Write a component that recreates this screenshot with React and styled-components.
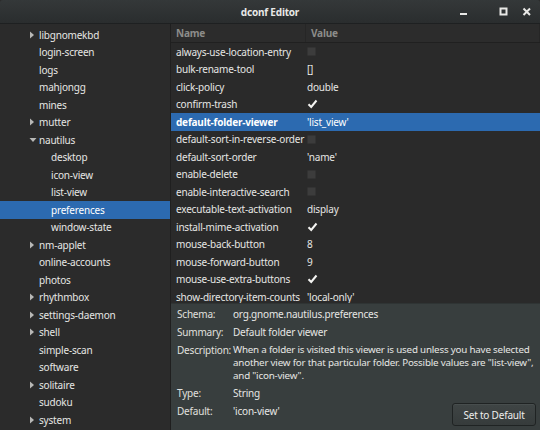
import React from 'react';
import styled, { createGlobalStyle } from 'styled-components';

const tree = [
  { name: 'libgnomekbd', level: 1, arrow: 'right' },
  { name: 'login-screen', level: 1 },
  { name: 'logs', level: 1 },
  { name: 'mahjongg', level: 1 },
  { name: 'mines', level: 1 },
  { name: 'mutter', level: 1, arrow: 'right' },
  { name: 'nautilus', level: 1, arrow: 'down' },
  { name: 'desktop', level: 2 },
  { name: 'icon-view', level: 2 },
  { name: 'list-view', level: 2 },
  { name: 'preferences', level: 2, selected: true },
  { name: 'window-state', level: 2 },
  { name: 'nm-applet', level: 1, arrow: 'right' },
  { name: 'online-accounts', level: 1 },
  { name: 'photos', level: 1 },
  { name: 'rhythmbox', level: 1, arrow: 'right' },
  { name: 'settings-daemon', level: 1, arrow: 'right' },
  { name: 'shell', level: 1, arrow: 'right' },
  { name: 'simple-scan', level: 1 },
  { name: 'software', level: 1 },
  { name: 'solitaire', level: 1, arrow: 'right' },
  { name: 'sudoku', level: 1 },
  { name: 'system', level: 1, arrow: 'right' },
];

const keys = [
  { name: 'always-use-location-entry', type: 'bool', value: false },
  { name: 'bulk-rename-tool', value: '[]' },
  { name: 'click-policy', value: 'double' },
  { name: 'confirm-trash', type: 'bool', value: true },
  { name: 'default-folder-viewer', value: "'list_view'", selected: true },
  { name: 'default-sort-in-reverse-order', type: 'bool', value: false },
  { name: 'default-sort-order', value: "'name'" },
  { name: 'enable-delete', type: 'bool', value: false },
  { name: 'enable-interactive-search', type: 'bool', value: false },
  { name: 'executable-text-activation', value: 'display' },
  { name: 'install-mime-activation', type: 'bool', value: true },
  { name: 'mouse-back-button', value: '8' },
  { name: 'mouse-forward-button', value: '9' },
  { name: 'mouse-use-extra-buttons', type: 'bool', value: true },
  { name: 'show-directory-item-counts', value: "'local-only'" },
];

const Check = () => (
  <svg width="11" height="10" viewBox="0 0 11 10">
    <path d="M1.5 5.2 L4.2 8 L9.5 1.5" fill="none" stroke="#f4f4f2" strokeWidth="2" />
  </svg>
);

const App = () => {
  return (
    <Window>
      <GlobalStyle />
      <TitleBar>
        <Title>dconf Editor</Title>
        <WinButtons>
          <WinButton $gap={30}>
            <svg width="10" height="10" viewBox="0 0 10 10">
              <rect x="1" y="6" width="7" height="2" fill="#e8e8e6" />
            </svg>
          </WinButton>
          <WinButton $gap={13}>
            <svg width="10" height="10" viewBox="0 0 10 10">
              <rect x="1.5" y="1.5" width="6" height="6" fill="none" stroke="#e8e8e6" strokeWidth="2" />
            </svg>
          </WinButton>
          <WinButton>
            <svg width="10" height="10" viewBox="0 0 10 10">
              <path d="M1.5 1.5 L8 8 M8 1.5 L1.5 8" stroke="#e8e8e6" strokeWidth="2" />
            </svg>
          </WinButton>
        </WinButtons>
      </TitleBar>
      <Body>
        <Tree>
          {tree.map((item, i) => (
            <TreeRow key={i} $selected={item.selected} $level={item.level}>
              <Arrow>
                {item.arrow === 'right' && (
                  <svg width="6" height="8" viewBox="0 0 6 8"><path d="M1 0.5 L5 4 L1 7.5Z" fill="#b8b8b6" /></svg>
                )}
                {item.arrow === 'down' && (
                  <svg width="8" height="6" viewBox="0 0 8 6"><path d="M0.5 1 L7.5 1 L4 5Z" fill="#b8b8b6" /></svg>
                )}
              </Arrow>
              <span>{item.name}</span>
            </TreeRow>
          ))}
        </Tree>
        <Right>
          <List>
            <Header>
              <HeadCell $w={135}>Name</HeadCell>
              <HeadCell>Value</HeadCell>
            </Header>
            {keys.map((k, i) => (
              <KeyRow key={i} $selected={k.selected}>
                <NameCell $selected={k.selected}>{k.name}</NameCell>
                <ValueCell>
                  {k.type === 'bool' ? (k.value ? <Check /> : <Box />) : k.value}
                </ValueCell>
              </KeyRow>
            ))}
          </List>
          <Details>
            <Info>
              <Label>Schema:</Label>
              <Text>org.gnome.nautilus.preferences</Text>
              <Label>Summary:</Label>
              <Text>Default folder viewer</Text>
              <Label>Description:</Label>
              <Text $multi>
                When a folder is visited this viewer is used unless you have selected<br />
                another view for that particular folder. Possible values are "list-view",<br />
                and "icon-view".
              </Text>
              <Label>Type:</Label>
              <Text>String</Text>
              <Label>Default:</Label>
              <Text>'icon-view'</Text>
            </Info>
            <DefaultButton>Set to Default</DefaultButton>
          </Details>
        </Right>
      </Body>
    </Window>
  );
};

export default App;

const GlobalStyle = createGlobalStyle`
  html, body {
    margin: 0;
    padding: 0;
    background: #2b2b2b;
  }
  body {
    font-family: 'Noto Sans', 'Open Sans', sans-serif;
    font-size: 10px;
    letter-spacing: -0.2px;
    color: #e6e6e4;
  }
`;

const Window = styled.div`
  width: 540px;
  height: 430px;
  display: flex;
  flex-direction: column;
  overflow: hidden;
  background: #2b2b2b;
`;

const TitleBar = styled.div`
  height: 24px;
  flex: none;
  position: relative;
  display: flex;
  align-items: center;
  justify-content: center;
  background: linear-gradient(#343839, #2a2d2e);
  border-bottom: 1px solid #1e2021;
  box-sizing: border-box;
  border-radius: 3px 3px 0 0;
`;

const Title = styled.div`
  font-weight: bold;
  font-size: 10px;
  color: #e8e8e6;
`;

const WinButtons = styled.div`
  position: absolute;
  right: 8px;
  top: 7px;
  display: flex;
`;

const WinButton = styled.span`
  display: flex;
  margin-right: ${p => p.$gap || 0}px;
`;

const Body = styled.div`
  flex: 1;
  display: flex;
  min-height: 0;
`;

const Tree = styled.div`
  width: 170px;
  flex: none;
  padding-top: 2px;
  background: #2b2b2b;
  border-right: 1px solid #1f1f1f;
  overflow: hidden;
`;

const TreeRow = styled.div`
  height: 17.5px;
  display: flex;
  align-items: center;
  padding-left: ${p => (p.$level === 2 ? 39 : 27)}px;
  background: ${p => (p.$selected ? '#2c6ab0' : 'transparent')};
  color: ${p => (p.$selected ? '#ffffff' : '#e6e6e4')};
  white-space: nowrap;
`;

const Arrow = styled.span`
  width: 12px;
  display: flex;
  align-items: center;
  padding-left: 2px;
  box-sizing: border-box;
`;

const Right = styled.div`
  flex: 1;
  display: flex;
  flex-direction: column;
  min-width: 0;
`;

const List = styled.div`
  height: 279px;
  flex: none;
  overflow: hidden;
  background: #2a2a2a;
`;

const Header = styled.div`
  height: 19px;
  display: flex;
  border-bottom: 1px solid #202020;
  box-sizing: border-box;
`;

const HeadCell = styled.div`
  width: ${p => (p.$w ? `${p.$w}px` : 'auto')};
  flex: ${p => (p.$w ? 'none' : '1')};
  padding-left: 5px;
  box-sizing: border-box;
  display: flex;
  align-items: center;
  color: #8c8c8a;
  font-weight: bold;
  background: #2c2c2c;
  border-right: 1px solid #262626;
`;

const KeyRow = styled.div`
  height: 17.5px;
  display: flex;
  align-items: center;
  background: ${p => (p.$selected ? '#2c6ab0' : 'transparent')};
  color: ${p => (p.$selected ? '#ffffff' : '#e6e6e4')};
  white-space: nowrap;
`;

const NameCell = styled.div`
  width: 135px;
  flex: none;
  padding-left: 5px;
  box-sizing: border-box;
  overflow: hidden;
  font-weight: ${p => (p.$selected ? 'bold' : 'normal')};
`;

const ValueCell = styled.div`
  flex: 1;
  padding-left: 1px;
  display: flex;
  align-items: center;
`;

const Box = styled.span`
  width: 9px;
  height: 9px;
  background: #3c3c3c;
  border: 1px solid #333;
  border-radius: 1px;
  box-sizing: border-box;
`;

const Details = styled.div`
  flex: 1;
  position: relative;
  background: #383e3e;
  border-top: 1px solid #2f3434;
  padding: 3px 6px 0 6px;
`;

const Info = styled.div`
  display: grid;
  grid-template-columns: 56px 1fr;
  row-gap: 4px;
  align-items: start;
`;

const Label = styled.div`
  line-height: 14px;
  color: #e0e0de;
  white-space: nowrap;
`;

const Text = styled.div`
  line-height: ${p => (p.$multi ? '13px' : '14px')};
  font-size: ${p => (p.$multi ? '9.8px' : '10px')};
  color: #e6e6e4;
  white-space: nowrap;
`;

const DefaultButton = styled.button`
  position: absolute;
  right: 4px;
  bottom: 4px;
  width: 84px;
  height: 23px;
  font-family: inherit;
  font-size: 10px;
  letter-spacing: inherit;
  color: #eeeeec;
  background: linear-gradient(#3f4545, #363b3b);
  border: 1px solid #1f2323;
  border-radius: 3px;
  box-shadow: inset 0 1px rgba(255,255,255,0.05);
`;
